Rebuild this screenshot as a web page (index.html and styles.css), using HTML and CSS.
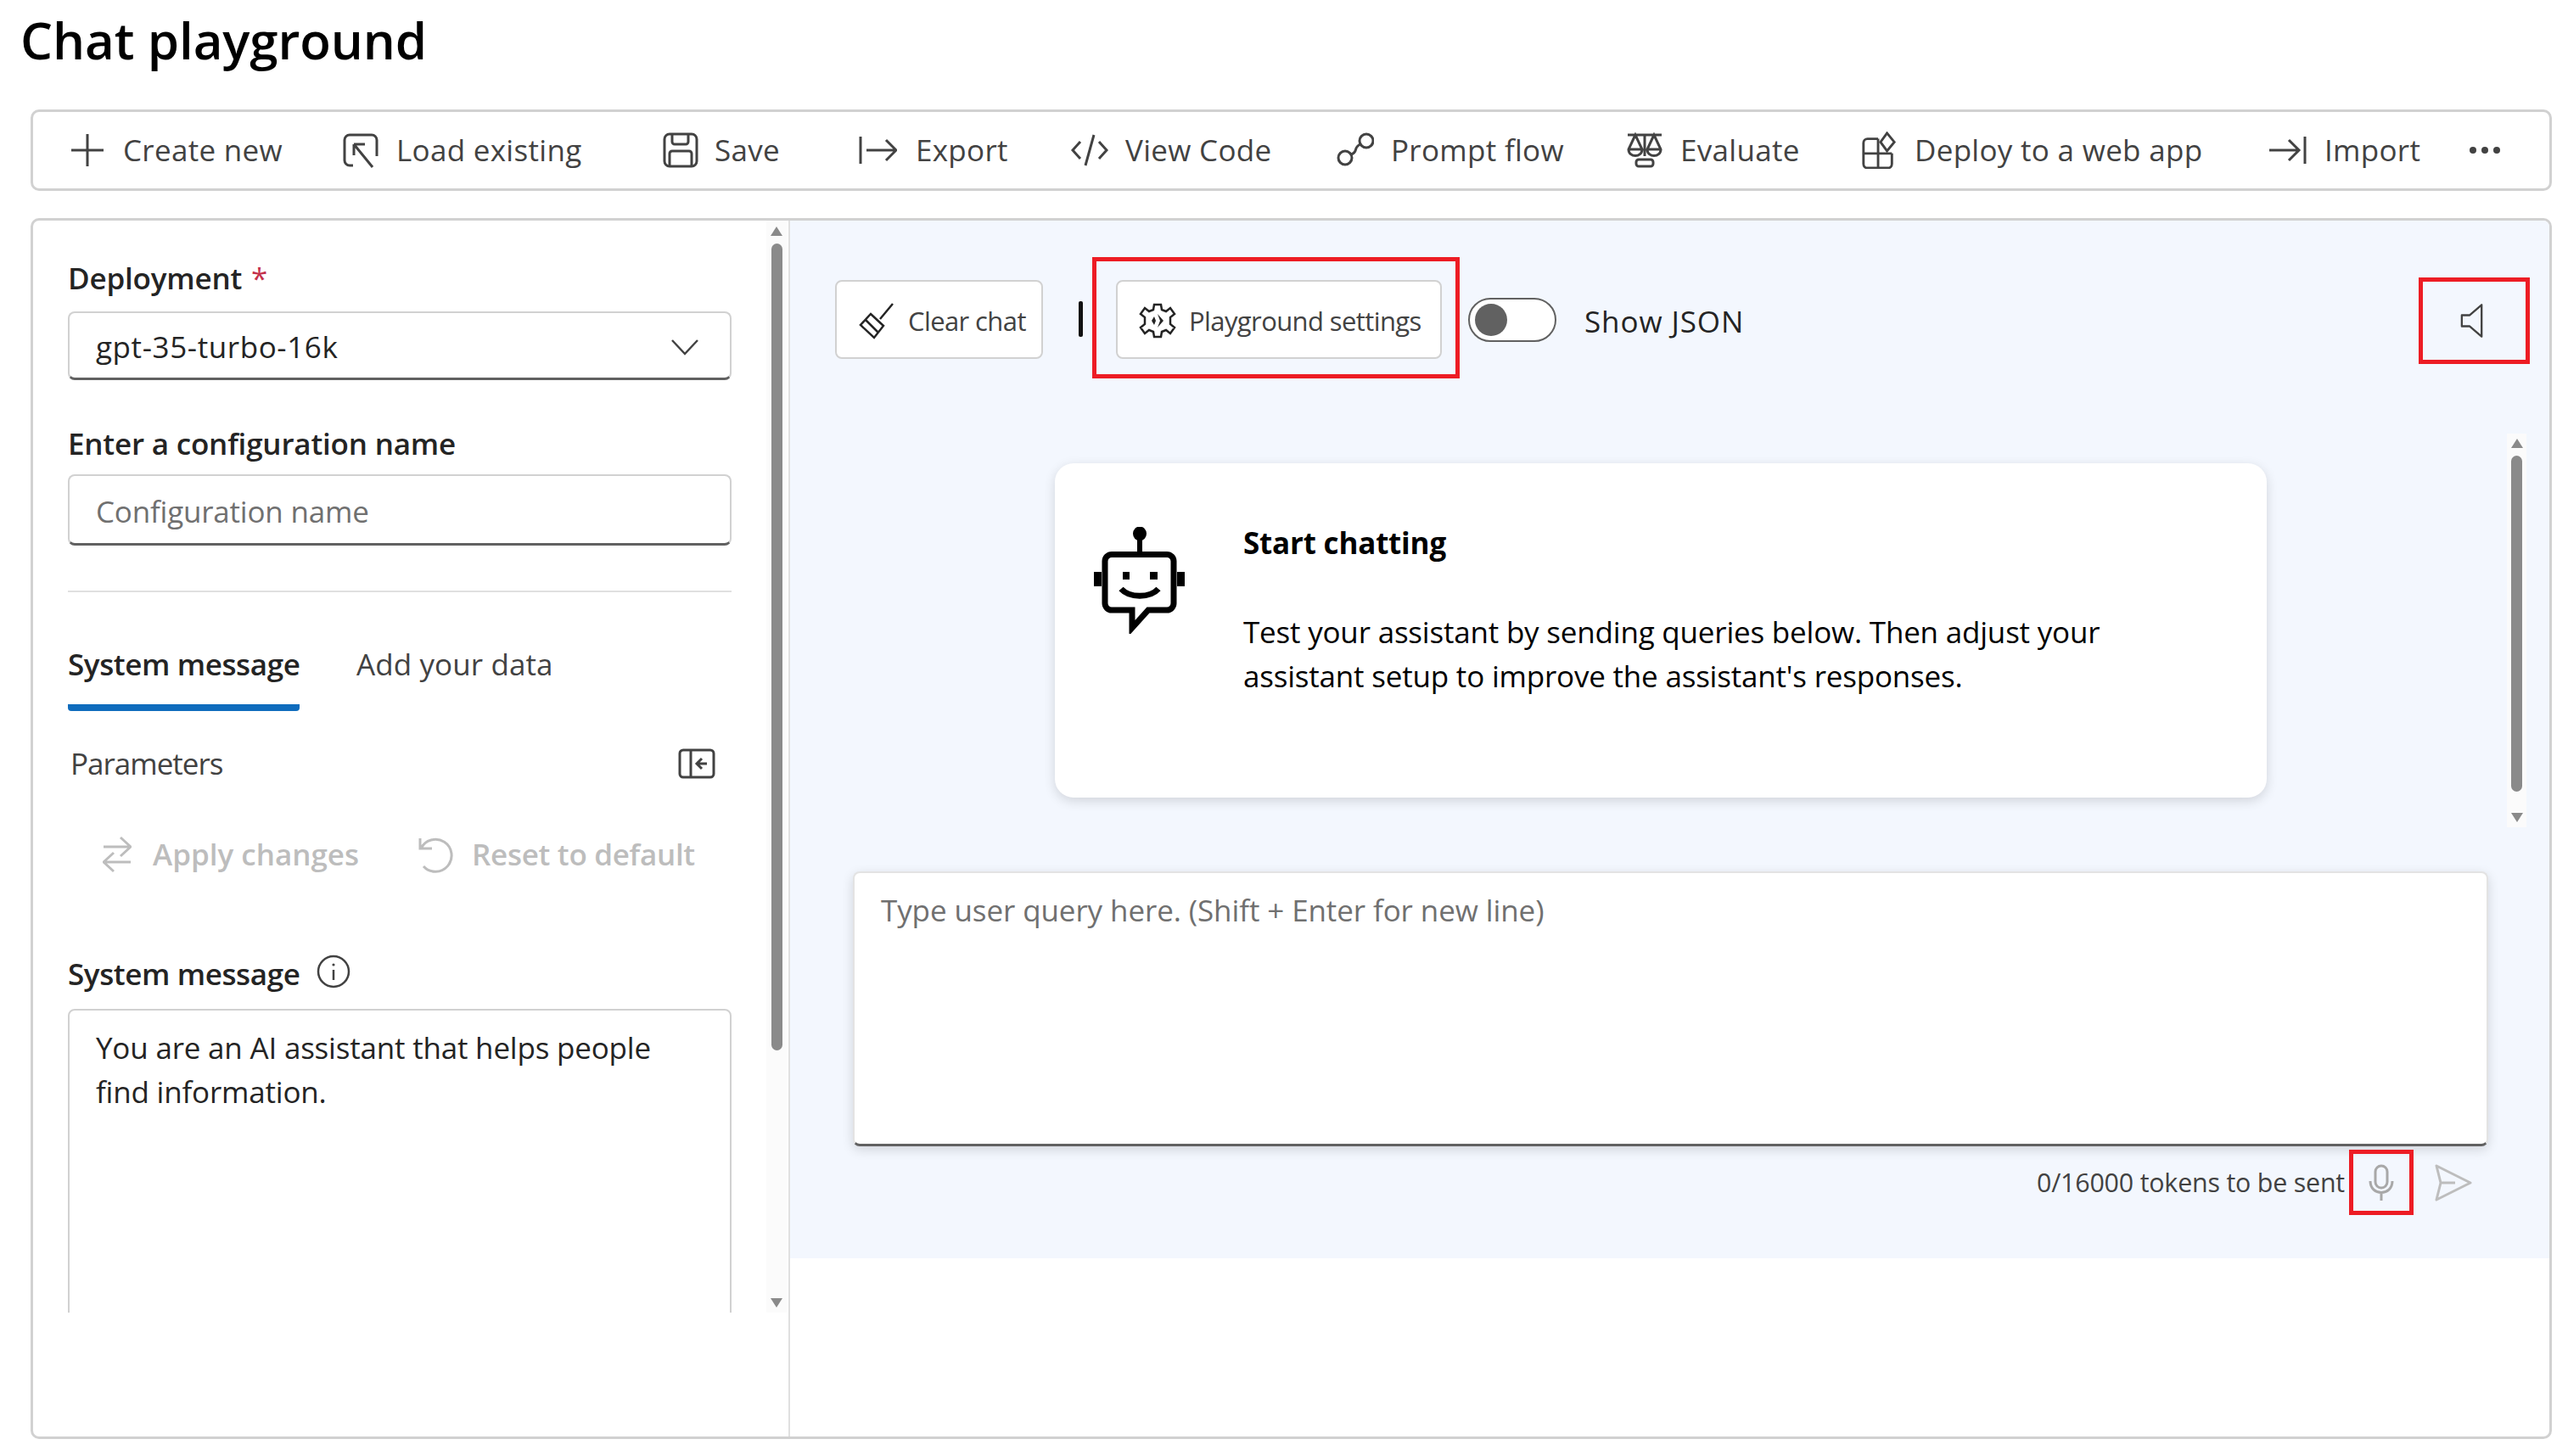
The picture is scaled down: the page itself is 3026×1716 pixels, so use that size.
FILE: index.html
```html
<!DOCTYPE html>
<html lang="en">
<head>
<meta charset="utf-8">
<title>Chat playground</title>
<link rel="stylesheet" href="styles.css">
</head>
<body>
<main class="page">
  <h1 class="title">Chat playground</h1>
  <nav class="toolbar">
    <div class="tool"><svg class="ico" viewBox="0 0 44 44"><path d="M22 3V41M3 22H41"/></svg><span>Create new</span></div>
    <div class="tool"><svg class="ico" viewBox="0 0 44 44"><path d="M13 40H9a6 6 0 0 1-6-6V10a6 6 0 0 1 6-6H35a6 6 0 0 1 6 6V29"/><path d="M14 15H27M14 15V28M14 15L36 42"/></svg><span>Load existing</span></div>
    <div class="tool tool-save"><svg class="ico" viewBox="0 0 44 44"><rect x="3" y="3" width="38" height="38" rx="6"/><path d="M12 3V12a3 3 0 0 0 3 3H28a3 3 0 0 0 3-3V3M9 41V26a3 3 0 0 1 3-3H32a3 3 0 0 1 3 3V41"/></svg><span>Save</span></div>
    <div class="tool tool-export"><svg class="ico ico-wide" viewBox="0 0 46 44"><path d="M3 6V38M10 22H45M33 10L45 22L33 34"/></svg><span>Export</span></div>
    <div class="tool"><svg class="ico" viewBox="0 0 44 44"><path d="M11 12L2 22L11 32M33 12L42 22L33 32M27 4L17 40"/></svg><span>View Code</span></div>
    <div class="tool"><svg class="ico" viewBox="0 0 44 44"><circle cx="10" cy="31" r="8"/><circle cx="35" cy="11" r="8"/><path d="M17 27C26 24 19 19 28 15"/></svg><span>Prompt flow</span></div>
    <div class="tool"><svg class="ico" viewBox="0 0 44 44"><path d="M2 4H42M22 4V29M11 4L3 21C3 31 19 31 19 21ZM3 21H19M33 4L25 21C25 31 41 31 41 21ZM25 21H41"/><rect x="12" y="33" width="20" height="8" rx="3"/></svg><span>Evaluate</span></div>
    <div class="tool"><svg class="ico" viewBox="0 0 44 46"><path d="M21 9H8a5 5 0 0 0-5 5V40a5 5 0 0 0 5 5H33a5 5 0 0 0 5-5V27M3 27H38M21 9V45M21 27H26"/><path d="M32 2L41 13L32 24L24 13Z"/></svg><span>Deploy to a web app</span></div>
    <div class="tool"><svg class="ico ico-wide" viewBox="0 0 46 44"><path d="M1 22H36M24 10L36 22L24 34M43 6V38"/></svg><span>Import</span></div>
    <div class="dots"><i></i><i></i><i></i></div>
  </nav>

  <section class="panel">
    <aside class="side">
      <div class="side-scroll">
        <label class="label label-first">Deployment <em>*</em></label>
        <div class="field field-select"><span>gpt-35-turbo-16k</span><svg class="chev" viewBox="0 0 34 20"><path d="M2 2L17 18L32 2"/></svg></div>
        <label class="label label-second">Enter a configuration name</label>
        <div class="field field-input">Configuration name</div>
        <hr class="divider">
        <div class="tabs">
          <div class="tab tab-on">System message</div>
          <div class="tab tab-off">Add your data</div>
        </div>
        <div class="params"><span class="params-name">Parameters</span><svg class="ico-param" viewBox="0 0 44 36"><rect x="2" y="2" width="40" height="32" rx="4"/><path d="M15 2V34M34 18H23M28 12L22 18L28 24"/></svg></div>
        <div class="actions">
          <div class="act act-apply"><svg class="act-ico" viewBox="0 0 34 44"><path d="M1 13H33M21 2L33 13L21 24M33 31H1M13 20L1 31L13 42"/></svg><span>Apply changes</span></div>
          <div class="act act-reset"><svg class="act-ico" viewBox="0 0 44 44"><path d="M5 3V15H19M6 15A19 19 0 1 1 9 36"/></svg><span>Reset to default</span></div>
        </div>
        <div class="sys-head"><span>System message</span><svg class="info" viewBox="0 0 40 40"><circle cx="20" cy="20" r="18"/><path d="M20 18V30"/><circle class="info-dot" cx="20" cy="12" r="1.6"/></svg></div>
        <div class="field-area">You are an AI assistant that helps people find information.</div>
        <div class="vbar vbar-side"><b class="arrow-up"></b><s class="thumb thumb-side"></s><b class="arrow-down"></b></div>
      </div>
    </aside>

    <div class="chat">
      <div class="chat-blue">
        <div class="chat-head">
          <button class="btn btn-clear"><svg class="btn-ico" viewBox="0 0 44 44"><path d="M41 2L26 20M15 14L30 28L19 42L3 27Z M9 21L23 35"/></svg><span>Clear chat</span></button>
          <i class="vsep"></i>
          <div class="mark mark-settings"><button class="btn btn-settings"><svg class="btn-ico" viewBox="0 0 44 44"><path d="M18 3H26L27 9L32 11L37 7L42 14L37 18V26L42 30L37 37L32 33L27 35L26 41H18L17 35L12 33L7 37L2 30L7 26V18L2 14L7 7L12 11L17 9Z"/><path class="solid" d="M22 14L29 22L22 30L25 22ZM18 17L15 22L18 27L20 22Z"/></svg><span>Playground settings</span></button></div>
          <div class="toggle"><i></i></div>
          <span class="json">Show JSON</span>
          <div class="mark mark-speaker"><svg class="speaker" viewBox="0 0 30 44"><path d="M27 2V42L12 29H2V15H12Z"/></svg></div>
        </div>
        <div class="card">
          <svg class="robot" viewBox="0 0 108 126"><ellipse class="fill" cx="54" cy="8" rx="8" ry="8.5"/><path class="fill" d="M51 14H57V32H51ZM0 53H9V70H0ZM98 53H107V70H98ZM34 53H42V62H34ZM66 53H75V62H66Z"/><path class="line" d="M21 32.5H86a8 8 0 0 1 8 8V90a8 8 0 0 1-8 8H64L45 119V98H21a8 8 0 0 1-8-8V40.5a8 8 0 0 1 8-8Z"/><path class="line" d="M32 73C42 84 66 84 76 73"/></svg>
          <div class="card-text">
            <div class="card-title">Start chatting</div>
            <p class="card-body">Test your assistant by sending queries below. Then adjust your assistant setup to improve the assistant's responses.</p>
          </div>
        </div>
        <div class="vbar vbar-chat"><b class="arrow-up"></b><s class="thumb thumb-chat"></s><b class="arrow-down"></b></div>
        <div class="query">Type user query here. (Shift + Enter for new line)</div>
        <div class="send-row">
          <span class="tokens">0/16000 tokens to be sent</span>
          <div class="mark mark-mic"><svg class="mic" viewBox="0 0 30 44"><rect x="8" y="2" width="14" height="26" rx="7"/><path d="M2 20C2 38 28 38 28 20M15 33V43"/></svg></div>
          <svg class="send" viewBox="0 0 44 44"><path d="M2 2L42 22L2 42L7 22ZM7 22H24"/></svg>
        </div>
      </div>
    </div>
  </section>
</main>
</body>
</html>
```
FILE: styles.css
```css
* { box-sizing: border-box; }
html, body { margin: 0; padding: 0; background: #fff; }
body { width: 3026px; height: 1716px; overflow: hidden; font-family: "Open Sans", "Noto Sans", sans-serif; font-size: 35px; line-height: 52px; color: #242424; letter-spacing: -0.2px; }
.page { padding: 0 19px 0 24px; }
.title { margin: 0; height: 129px; padding-top: 10px; font-size: 60px; line-height: 74px; font-weight: 600; color: #000; letter-spacing: -0.1px; }

.toolbar { margin-left: 12px; height: 96px; border: 3px solid #d1d1d1; border-radius: 10px; padding-left: 42px; display: grid; grid-template-columns: 322px 377px 231px 251px 313px 341px 276px 481px 237px auto; align-items: center; color: #424242; font-weight: 500; letter-spacing: 0.3px; }
.tool { display: flex; align-items: center; gap: 20px; }
.ico { width: 44px; height: 44px; fill: none; stroke: #424242; stroke-width: 3; flex: none; }
.ico-wide { width: 46px; }
.tool-save { gap: 18px; }
.tool-export { gap: 22px; }
.dots { display: flex; gap: 6px; }
.dots i { width: 8px; height: 8px; border-radius: 50%; background: #424242; }

.panel { margin: 32px 0 0 12px; height: 1439px; border: 3px solid #d1d1d1; border-radius: 10px; display: flex; overflow: hidden; }
.side { width: 892px; flex: none; border-right: 2px solid #e0e0e0; }
.side-scroll { position: relative; height: 1287px; overflow: hidden; padding-left: 41px; }
.label { display: block; font-weight: 600; }
.label em { color: #c4314b; font-style: normal; margin-left: 2px; font-weight: 500; }
.label-first { margin-top: 42px; }
.field { width: 782px; border: 2px solid #d1d1d1; border-bottom: 3px solid #616161; border-radius: 8px; display: flex; align-items: center; padding-left: 31px; }
.field-select { height: 81px; margin-top: 13px; padding-top: 4px; justify-content: space-between; letter-spacing: 0.6px; }
.chev { width: 34px; height: 20px; margin-right: 36px; fill: none; stroke: #424242; stroke-width: 2.5; }
.label-second { margin-top: 49px; }
.field-input { height: 84px; margin-top: 10px; padding-top: 4px; color: #707070; }
.divider { width: 782px; margin: 53px 0 0; border: 0; height: 2px; background: #e0e0e0; }
.tabs { display: flex; gap: 67px; margin-top: 59px; color: #424242; }
.tab { height: 81px; }
.tab-off { letter-spacing: 0.1px; }
.tab-on { width: 273px; border-bottom: 8px solid #0f6cbd; border-radius: 0 0 4px 4px; font-weight: 600; color: #242424; white-space: nowrap; letter-spacing: -0.4px; }
.params { width: 760px; margin: 36px 0 0 3px; display: flex; justify-content: space-between; align-items: center; color: #424242; }
.params-name { letter-spacing: -1px; }
.ico-param { width: 44px; height: 36px; fill: none; stroke: #424242; stroke-width: 3; }
.actions { display: flex; margin: 55px 0 0 41px; color: #bdbdbd; font-weight: 600; }
.act { display: flex; align-items: center; }
.act-ico { height: 44px; fill: none; stroke: #bdbdbd; stroke-width: 3; flex: none; }
.act-apply { width: 369px; gap: 25px; letter-spacing: 0; }
.act-apply .act-ico { width: 34px; }
.act-reset { gap: 22px; letter-spacing: -0.3px; }
.act-reset .act-ico { width: 44px; }
.sys-head { display: flex; align-items: center; gap: 20px; margin-top: 89px; font-weight: 600; letter-spacing: -0.4px; }
.info { width: 40px; height: 40px; fill: none; stroke: #424242; stroke-width: 2.5; margin-top: -6px; }
.info-dot { fill: #424242; stroke: none; }
.field-area { width: 782px; height: 400px; margin-top: 15px; border: 2px solid #d1d1d1; border-radius: 8px; padding: 18px 50px 20px 31px; }

.vbar { position: absolute; background: #fbfbfb; display: flex; flex-direction: column; align-items: center; }
.vbar-side { top: 0; right: 2px; width: 24px; height: 100%; padding-top: 7px; }
.vbar-chat { top: 251px; right: 27px; width: 23px; height: 464px; padding-top: 6px; }
.thumb { display: block; width: 13px; background: #8a8a8a; border-radius: 7px; margin-top: 9px; }
.thumb-side { height: 951px; }
.thumb-chat { height: 396px; }
.arrow-up, .arrow-down { width: 0; height: 0; border-left: 7px solid transparent; border-right: 7px solid transparent; }
.arrow-up { border-bottom: 11px solid #8a8a8a; }
.arrow-down { border-top: 11px solid #8a8a8a; margin-top: auto; margin-bottom: 6px; }

.chat { flex: 1; min-width: 0; }
.chat-blue { position: relative; height: 1223px; background: #f3f7fe; padding-top: 43px; }
.chat-head { display: flex; align-items: flex-start; height: 147px; padding: 0 23px 0 53px; }
.btn { height: 93px; border: 2px solid #d1d1d1; border-radius: 8px; background: #fff; display: flex; align-items: center; padding: 2px 0 0 25px; gap: 15px; font: inherit; font-size: 31px; letter-spacing: -0.6px; color: #424242; white-space: nowrap; }
.btn-clear { width: 245px; margin-top: 27px; }
.btn-settings { width: 384px; }
.btn-ico { width: 44px; height: 44px; fill: none; stroke: #242424; stroke-width: 2.5; flex: none; }
.btn-ico .solid { fill: #242424; stroke: none; }
.vsep { width: 5px; height: 42px; background: #111; margin: 52px 11px 0 42px; border-radius: 2px; }
.mark { border: 5px solid #ed1c24; flex: none; }
.mark-settings { width: 433px; height: 143px; padding: 22px 23px; }
.toggle { width: 104px; height: 52px; margin: 48px 0 0 10px; border: 2px solid #616161; border-radius: 26px; padding: 5px 6px; background: #fff; }
.toggle i { display: block; width: 38px; height: 38px; border-radius: 50%; background: #616161; }
.json { margin: 50px 0 0 33px; color: #242424; letter-spacing: 0.9px; }
.mark-speaker { margin: 24px 0 0 auto; width: 131px; height: 102px; display: flex; justify-content: center; align-items: center; padding-right: 6px; }
.speaker { width: 28px; height: 42px; fill: none; stroke: #424242; stroke-width: 2.5; stroke-linejoin: round; }

.card { margin: 96px 0 0 312px; width: 1428px; height: 394px; background: #fff; border-radius: 22px; box-shadow: 0 4px 14px rgba(0,0,0,.14); padding: 68px 0 0 46px; display: flex; gap: 68px; }
.robot { width: 108px; height: 126px; flex: none; margin-top: 7px; }
.robot .fill { fill: #000; }
.robot .line { fill: none; stroke: #000; stroke-width: 7; }
.card-text { width: 1050px; color: #000; }
.card-title { font-weight: 700; color: #000; }
.card-body { margin: 53px 0 0; }

.query { margin: 87px 0 0 74px; width: 1927px; height: 324px; background: #fff; border: 2px solid #e3e3e3; border-bottom: 3px solid #616161; border-radius: 8px; padding: 18px 31px; color: #707070; box-shadow: 0 4px 14px rgba(0,0,0,.14); letter-spacing: -0.1px; }
.send-row { display: flex; justify-content: flex-end; align-items: center; padding: 4px 91px 0 0; }
.tokens { font-size: 30.4px; color: #424242; margin-right: 5px; }
.mark-mic { width: 76px; height: 77px; display: flex; justify-content: center; align-items: center; }
.mic { width: 30px; height: 44px; fill: none; stroke: #a8a8a8; stroke-width: 3; }
.send { width: 44px; height: 44px; margin-left: 25px; fill: none; stroke: #bdbdbd; stroke-width: 3; stroke-linejoin: round; }
```
